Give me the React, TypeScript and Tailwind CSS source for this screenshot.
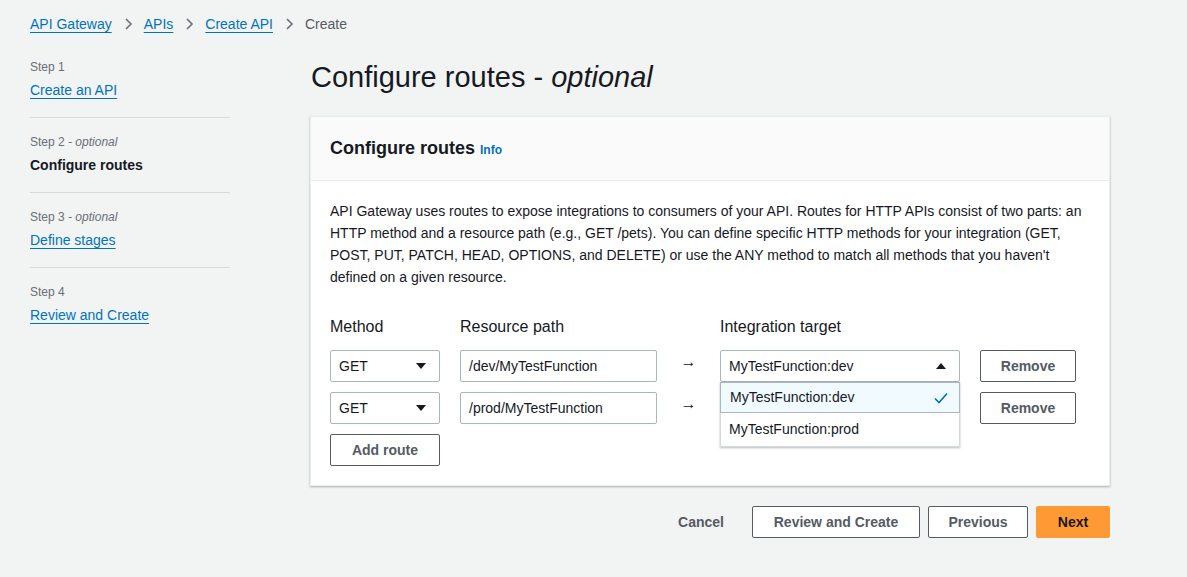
import React from "react"

const font = { fontFamily: '"Liberation Sans", Arial, sans-serif' }

function Chevron() {
  return (
    <svg width="16" height="16" viewBox="0 0 16 16" className="mx-[8px] text-[#687078]">
      <path d="M6 3l5 5-5 5" fill="none" stroke="currentColor" strokeWidth="1.6" />
    </svg>
  )
}

function Caret({ up = false }: { up?: boolean }) {
  return (
    <svg width="12" height="12" viewBox="0 0 12 12" className="text-[#16191f]">
      {up ? <path d="M1 9h10L6 3z" fill="currentColor" /> : <path d="M1 3h10L6 9z" fill="currentColor" />}
    </svg>
  )
}

function NavStep({ step, optional, label, active, first }: { step: string; optional?: boolean; label: string; active?: boolean; first?: boolean }) {
  return (
    <div className={`${first ? "pb-[17px]" : "pt-[16px] pb-[17px]"} border-b border-[#d5dbdb] last:border-b-0`}>
      <div className="text-[12px] leading-[16px] text-[#687078]">
        {step}
        {optional && <span className="italic"> - optional</span>}
      </div>
      {active ? (
        <div className="mt-[5px] text-[14px] leading-[20px] font-bold text-[#16191f]">{label}</div>
      ) : (
        <a className="mt-[5px] block w-fit text-[14px] leading-[20px] text-[#0073bb] underline underline-offset-[3px]">{label}</a>
      )}
    </div>
  )
}

function MethodSelect() {
  return (
    <div className="flex h-[32px] w-[110px] items-center justify-between rounded-[2px] border border-[#aab7b8] bg-white pl-[8px] pr-[12px] text-[14px] text-[#16191f]">
      <span>GET</span>
      <Caret />
    </div>
  )
}

function PathInput({ value }: { value: string }) {
  return (
    <div className="flex h-[32px] w-[197px] items-center rounded-[2px] border border-[#aab7b8] bg-white px-[8px] text-[14px] text-[#16191f]">
      {value}
    </div>
  )
}

function Arrow() {
  return <div className="flex w-[63px] justify-center pb-[8px] text-[16px] text-[#16191f]">→</div>
}

function OutlineButton({ children, className = "" }: { children: React.ReactNode; className?: string }) {
  return (
    <button className={`h-[32px] rounded-[2px] border border-[#545b64] bg-white text-[14px] font-bold text-[#545b64] ${className}`}>
      {children}
    </button>
  )
}

export default function App() {
  return (
    <div style={font} className="min-h-[577px] bg-[#f2f3f3] px-[30px] pt-[14px]">
      <div className="flex h-[20px] items-center text-[14px] leading-[20px]">
        <a className="text-[#0073bb] underline underline-offset-[3px]">API Gateway</a>
        <Chevron />
        <a className="text-[#0073bb] underline underline-offset-[3px]">APIs</a>
        <Chevron />
        <a className="text-[#0073bb] underline underline-offset-[3px]">Create API</a>
        <Chevron />
        <span className="text-[#545b64]">Create</span>
      </div>

      <div className="mt-[25px] flex gap-[80px]">
        <div className="w-[200px] shrink-0">
          <NavStep first step="Step 1" label="Create an API" />
          <NavStep step="Step 2" optional label="Configure routes" active />
          <NavStep step="Step 3" optional label="Define stages" />
          <NavStep step="Step 4" label="Review and Create" />
        </div>

        <div className="w-[800px]">
          <h1 className="pl-[1px] text-[29px] leading-[36px] text-[#16191f]">
            Configure routes - <span className="italic">optional</span>
          </h1>

          <div className="mt-[21px] border border-[#eaeded] bg-white shadow-[0_1px_2px_rgba(0,28,36,0.3)]">
            <div className="flex h-[64px] items-center border-b border-[#eaeded] bg-[#fafafa] px-[19px]">
              <span className="text-[18px] font-bold text-[#16191f]">Configure routes</span>
              <a className="ml-[5px] mt-[3px] text-[12px] font-bold text-[#0073bb]">Info</a>
            </div>
            <div className="px-[19px] pb-[19px] pt-[19px]">
              <p className="text-[14px] leading-[22px] text-[#16191f]">
                API Gateway uses routes to expose integrations to consumers of your API. Routes for HTTP APIs consist of two parts: an HTTP method and a resource path (e.g., GET /pets). You can define specific HTTP methods for your integration (GET, POST, PUT, PATCH, HEAD, OPTIONS, and DELETE) or use the ANY method to match all methods that you haven't defined on a given resource.
              </p>

              <div className="mt-[28px] flex text-[16px] leading-[22px] text-[#16191f]">
                <div className="w-[130px]">Method</div>
                <div className="w-[260px]">Resource path</div>
                <div>Integration target</div>
              </div>

              <div className="mt-[12px] flex flex-col gap-[10px]">
                <div className="flex items-center">
                  <MethodSelect />
                  <div className="ml-[20px]"><PathInput value="/dev/MyTestFunction" /></div>
                  <Arrow />
                  <div className="relative">
                    <div className="flex h-[32px] w-[240px] items-center justify-between rounded-[2px] border border-[#aab7b8] bg-white pl-[8px] pr-[12px] text-[14px] text-[#16191f]">
                      <span>MyTestFunction:dev</span>
                      <Caret up />
                    </div>
                    <div className="absolute left-0 top-[32px] z-10 w-[240px] border border-[#d5dbdb] border-t-0 bg-white shadow-[0_1px_2px_rgba(0,28,36,0.3)]">
                      <div className="-mx-px flex h-[31px] items-center justify-between border border-[#aab7b8] bg-[#f1faff] pl-[9px] pr-[10px] text-[14px] text-[#16191f]">
                        <span>MyTestFunction:dev</span>
                        <svg width="16" height="16" viewBox="0 0 16 16">
                          <path d="M2 8.5l4 4 8-9" fill="none" stroke="#0073bb" strokeWidth="1.6" />
                        </svg>
                      </div>
                      <div className="flex h-[33px] items-center pl-[8px] text-[14px] text-[#16191f]">MyTestFunction:prod</div>
                    </div>
                  </div>
                  <OutlineButton className="ml-[20px] w-[96px]">Remove</OutlineButton>
                </div>

                <div className="flex items-center">
                  <MethodSelect />
                  <div className="ml-[20px]"><PathInput value="/prod/MyTestFunction" /></div>
                  <Arrow />
                  <div className="h-[32px] w-[240px]" />
                  <OutlineButton className="ml-[20px] w-[96px]">Remove</OutlineButton>
                </div>

                <div>
                  <OutlineButton className="w-[110px]">Add route</OutlineButton>
                </div>
              </div>
            </div>
          </div>

          <div className="mt-[20px] flex items-center justify-end gap-[8px]">
            <button className="mr-[20px] text-[14px] font-bold text-[#545b64]">Cancel</button>
            <OutlineButton className="w-[168px]">Review and Create</OutlineButton>
            <OutlineButton className="w-[100px]">Previous</OutlineButton>
            <button className="h-[32px] w-[74px] rounded-[2px] bg-[#ff9933] text-[14px] font-bold text-[#16191f]">Next</button>
          </div>
        </div>
      </div>
    </div>
  )
}
